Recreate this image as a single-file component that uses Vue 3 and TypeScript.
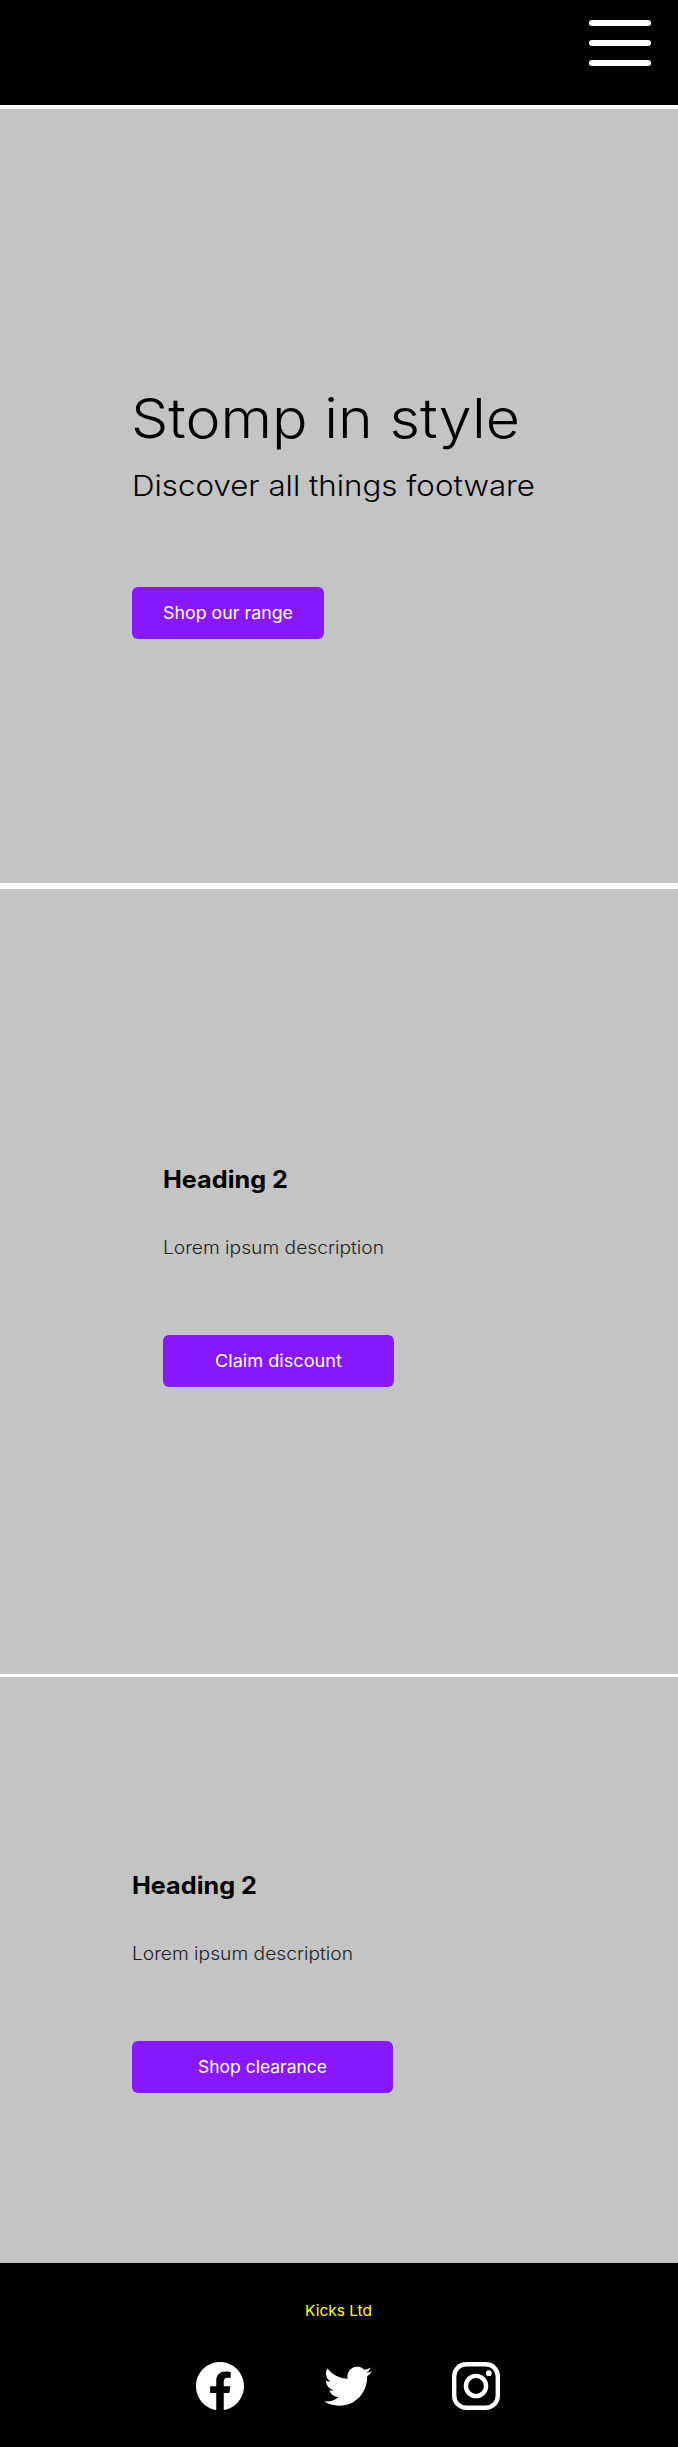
<script setup lang="ts">
import { h, type FunctionalComponent } from 'vue'

interface Promo {
  id: string
  heading: string
  text: string
  action: string
  actionWidth: number
}

const promos: Promo[] = [
  { id: 'discount', heading: 'Heading 2', text: 'Lorem ipsum description', action: 'Claim discount', actionWidth: 127 },
  { id: 'clearance', heading: 'Heading 2', text: 'Lorem ipsum description', action: 'Shop clearance', actionWidth: 129 },
]

// A single line of text set to a fixed measure.
const Line: FunctionalComponent<{ text: string; width: number; height: number; base: number }> = (p) =>
  h('svg', { class: 'line', width: p.width, height: p.height }, [
    h('text', { x: 0, y: p.base, fill: 'currentColor', textLength: p.width, lengthAdjust: 'spacingAndGlyphs' }, p.text),
  ])
Line.props = ['text', 'width', 'height', 'base']
</script>

<template>
  <div class="page">
    <header class="bar">
      <button class="menu" aria-label="Menu"><span></span><span></span><span></span></button>
    </header>

    <section class="hero">
      <h1><Line text="Stomp in style" :width="389" :height="60" :base="50" /></h1>
      <p class="lead"><Line text="Discover all things footware" :width="403" :height="36" :base="29" /></p>
      <a class="btn"><Line text="Shop our range" :width="130" :height="20" :base="16" /></a>
    </section>

    <section v-for="promo in promos" :key="promo.id" class="promo" :class="promo.id">
      <h2><Line :text="promo.heading" :width="125" :height="30" :base="23" /></h2>
      <p class="copy"><Line :text="promo.text" :width="221" :height="24" :base="18" /></p>
      <a class="btn"><Line :text="promo.action" :width="promo.actionWidth" :height="20" :base="16" /></a>
    </section>

    <footer class="foot">
      <div class="brand"><Line text="Kicks Ltd" :width="67" :height="20" :base="15" /></div>
      <nav class="social">
        <svg viewBox="0 0 48 48" aria-label="Facebook">
          <path d="M48 24.15C48 10.81 37.25 0 24 0S0 10.81 0 24.15C0 36.2 8.78 46.19 20.25 48V31.12h-6.1v-6.97h6.1v-5.32c0-6.05 3.58-9.39 9.07-9.39 2.62 0 5.37.47 5.37.47v5.94h-3.03c-2.98 0-3.91 1.86-3.91 3.77v4.53h6.66l-1.07 6.97h-5.59V48C39.22 46.19 48 36.2 48 24.15z" />
        </svg>
        <svg viewBox="0 0.45 16 16" aria-label="Twitter">
          <path d="M5.026 15c6.038 0 9.341-5.003 9.341-9.334 0-.14 0-.282-.006-.422A6.685 6.685 0 0 0 16 3.542a6.658 6.658 0 0 1-1.889.518 3.301 3.301 0 0 0 1.447-1.817 6.533 6.533 0 0 1-2.087.793A3.286 3.286 0 0 0 7.875 6.03a9.325 9.325 0 0 1-6.767-3.429 3.289 3.289 0 0 0 1.018 4.382A3.323 3.323 0 0 1 .64 6.575v.045a3.288 3.288 0 0 0 2.632 3.218 3.203 3.203 0 0 1-.865.115 3.23 3.23 0 0 1-.614-.057 3.283 3.283 0 0 0 3.067 2.277A6.588 6.588 0 0 1 .78 13.58a6.32 6.32 0 0 1-.78-.045A9.344 9.344 0 0 0 5.026 15z" />
        </svg>
        <svg viewBox="0 0 48 48" aria-label="Instagram">
          <rect x="2.2" y="2.2" width="43.6" height="43.6" rx="12" fill="none" stroke="#fff" stroke-width="4.4" />
          <circle cx="24" cy="24" r="10.1" fill="none" stroke="#fff" stroke-width="4.4" />
          <circle cx="36.8" cy="11.2" r="2.9" />
        </svg>
      </nav>
    </footer>
  </div>
</template>

<style>
body {
  margin: 0;
  background: #fff;
}
</style>

<style scoped>
.page {
  display: flex;
  flex-direction: column;
  height: 2447px;
  font-family: Inter, "Open Sans", sans-serif;
  color: #000;
  background: #fff;
}
.line {
  display: block;
  overflow: visible;
}
h1,
h2,
p {
  margin: 0;
}
.bar {
  display: flex;
  justify-content: flex-end;
  box-sizing: border-box;
  height: 105px;
  padding: 20px 27px 0 0;
  background: #000;
}
.menu {
  display: flex;
  flex-direction: column;
  gap: 14px;
  width: 62px;
  height: 46px;
  padding: 0;
  border: 0;
  background: none;
}
.menu span {
  width: 62px;
  height: 6px;
  border-radius: 3px;
  background: #fff;
}
.hero,
.promo {
  display: flex;
  flex-direction: column;
  align-items: flex-start;
  box-sizing: border-box;
  background: #c4c4c4;
}
.hero {
  height: 774px;
  margin-top: 4px;
  padding: 279px 0 0 132px;
}
.discount {
  height: 785px;
  margin-top: 6px;
  padding: 276px 0 0 163px;
}
.clearance {
  height: 586px;
  margin-top: 3px;
  padding: 194px 0 0 132px;
}
h1 {
  margin-left: -1px;
  font-size: 55px;
  font-weight: 350;
}
.lead {
  margin-top: 19px;
  font-size: 29px;
  font-weight: 350;
}
h2 {
  font-size: 24px;
  font-weight: 700;
}
.copy {
  margin-top: 41px;
  font-size: 18px;
  font-weight: 300;
  color: #222;
}
.btn {
  display: flex;
  align-items: center;
  justify-content: center;
  width: 192px;
  height: 52px;
  border-radius: 6px;
  background: #8818ff;
  color: #fff;
  font-size: 17px;
  font-weight: 400;
}
.hero .btn {
  margin-top: 84px;
}
.promo .btn {
  margin-top: 75px;
}
.discount .btn {
  width: 231px;
}
.clearance .btn {
  width: 261px;
}
.foot {
  flex: 1;
  padding-top: 38px;
  background: #000;
}
.brand {
  display: flex;
  justify-content: center;
  padding-right: 2px;
  font-size: 15px;
  color: #ff0;
}
.social {
  display: flex;
  gap: 80px;
  margin: 41px 0 0 196px;
}
.social svg {
  width: 48px;
  height: 48px;
  fill: #fff;
}
</style>
